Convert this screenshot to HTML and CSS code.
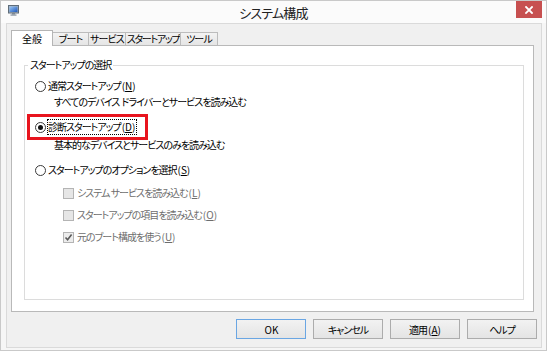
FILE: index.html
```html
<!DOCTYPE html>
<html lang="ja">
<head>
<meta charset="utf-8">
<title>システム構成</title>
<link rel="stylesheet" href="styles.css">
</head>
<body>
<div class="window">
  <div class="titlebar">
    <div class="tb-left">
      <svg class="app-icon" viewBox="0 0 11 11" aria-hidden="true">
        <defs>
          <linearGradient id="scr" x1="0" y1="0" x2="1" y2="1">
            <stop offset="0" stop-color="#9cc8f5"/>
            <stop offset="1" stop-color="#1d58bd"/>
          </linearGradient>
        </defs>
        <rect x="0.5" y="0.5" width="10" height="7.5" fill="#a7b1bb" stroke="#5f6d7a"/>
        <rect x="1.5" y="1.5" width="8" height="5.5" fill="url(#scr)"/>
        <rect x="4" y="8.3" width="3" height="1.2" fill="#6b7784"/>
        <rect x="2.5" y="9.4" width="6" height="1.3" fill="#8a96a3"/>
      </svg>
    </div>
    <div class="title">システム構成</div>
    <div class="tb-right">
      <div class="close">
        <svg viewBox="0 0 8 8" class="close-x" aria-hidden="true">
          <path d="M1 1 L7 7 M7 1 L1 7" stroke="#fff" stroke-width="1.8" stroke-linecap="square"/>
        </svg>
      </div>
    </div>
  </div>

  <div class="client">
    <div class="tabs">
      <div class="tab selected w-zen">全般</div>
      <div class="tab w-boot">ブート</div>
      <div class="tab w-svc">サービス</div>
      <div class="tab w-start">スタートアップ</div>
      <div class="tab w-tool">ツール</div>
    </div>

    <div class="panel">
      <fieldset class="group">
        <legend>スタートアップの選択</legend>
        <div class="opts">
          <div class="row r1"><span class="radio"></span><span class="lbl">通常スタートアップ<span class="key">(<u>N</u>)</span></span></div>
          <div class="desc">すべてのデバイス ドライバーとサービスを読み込む</div>
          <div class="annot">
            <div class="row"><span class="radio checked"></span><span class="lbl focus">診断スタートアップ<span class="key">(<u>D</u>)</span></span></div>
          </div>
          <div class="desc d2">基本的なデバイスとサービスのみを読み込む</div>
          <div class="row r3"><span class="radio"></span><span class="lbl">スタートアップのオプションを選択<span class="key">(<u>S</u>)</span></span></div>
          <div class="row cb-row c1"><span class="check"></span><span class="lbl dis">システム サービスを読み込む<span class="key">(<u>L</u>)</span></span></div>
          <div class="row cb-row c2"><span class="check"></span><span class="lbl dis">スタートアップの項目を読み込む<span class="key">(<u>O</u>)</span></span></div>
          <div class="row cb-row c3"><span class="check checked">
            <svg viewBox="0 0 9 9" class="tick" aria-hidden="true"><path d="M1.5 4.5 L3.6 6.8 L7.6 1.6" fill="none" stroke="#5a5a5a" stroke-width="1.6"/></svg>
          </span><span class="lbl dis">元のブート構成を使う<span class="key">(<u>U</u>)</span></span></div>
        </div>
      </fieldset>
    </div>

    <div class="buttons">
      <div class="btn default"><span class="key">OK</span></div>
      <div class="btn">キャンセル</div>
      <div class="btn">適用<span class="key">(<u>A</u>)</span></div>
      <div class="btn">ヘルプ</div>
    </div>
  </div>
</div>
</body>
</html>
```

FILE: styles.css
```css
* { box-sizing: border-box; }
html, body { margin: 0; padding: 0; }
body {
  width: 547px;
  height: 351px;
  overflow: hidden;
  background: #fff;
  font-family: "Noto Sans CJK JP", "Liberation Sans", sans-serif;
  font-size: 10px;
  color: #000;
  font-feature-settings: "palt";
  letter-spacing: -1px;
}
u { text-decoration: underline; text-underline-offset: 1px; }
.key { letter-spacing: 0; padding-left: 1px; }

.window {
  width: 547px;
  height: 351px;
  border: 1px solid #c9c9c9;
  background: #f6f6f6;
  display: flex;
  flex-direction: column;
}

/* title bar */
.titlebar {
  height: 22px;
  display: grid;
  grid-template-columns: 1fr auto 1fr;
  align-items: start;
  background: #fbfbfb;
}
.tb-left { padding: 4px 0 0 7px; }
.app-icon { display: block; width: 11px; height: 11px; }
.title {
  font-size: 13px;
  line-height: 22px;
  padding-top: 1px;
  letter-spacing: -0.8px;
  color: #222;
}
.tb-right { display: flex; justify-content: flex-end; padding-right: 4px; }
.close {
  width: 26px;
  height: 17px;
  background: #c75050;
  display: flex;
  align-items: center;
  justify-content: center;
}
.close-x { width: 8px; height: 8px; display: block; }

/* client area */
.client {
  flex: 1;
  margin: 0 4px 2px 5px;
  border: 1px solid #dadada;
  background: #f0f0f0;
  padding: 6px 4px 0 4px;
  display: flex;
  flex-direction: column;
}

/* tabs */
.tabs {
  display: flex;
  align-items: flex-end;
  height: 15px;
  position: relative;
  z-index: 1;
}
.tab {
  flex: none;
  height: 13px;
  border: 1px solid #bcbcbc;
  border-bottom: none;
  margin-left: -1px;
  background: linear-gradient(#f3f3f3, #e5e5e5);
  display: flex;
  align-items: center;
  justify-content: center;
  line-height: 12px;
  white-space: nowrap;
  overflow: hidden;
  letter-spacing: -0.9px;
}
.tab.selected {
  height: 16px;
  margin-left: 0;
  margin-bottom: -1px;
  background: #fff;
  position: relative;
  z-index: 2;
  border-color: #b5b5b5;
  letter-spacing: 0;
}
.w-zen { width: 42px; }
.w-boot { width: 37px; }
.w-svc { width: 38px; }
.w-start { width: 56px; letter-spacing: -1.3px; }
.w-tool { width: 38px; }

/* panel */
.panel {
  height: 267px;
  margin-right: 3px;
  border: 1px solid #b9b9b9;
  background: #fff;
  padding: 0 9px 11px 12px;
  display: flex;
  flex-direction: column;
}
.group {
  margin: 12px 0 0 0;
  flex: 1;
  border: 1px solid #dcdcdc;
  padding: 0;
  min-width: 0;
}
.group legend {
  margin-left: 3px;
  padding: 0 2px;
  line-height: 14px;
}
.opts {
  padding: 6px 0 0 10px;
  display: flex;
  flex-direction: column;
  align-items: flex-start;
}
.row {
  display: flex;
  align-items: center;
  height: 16px;
}
.radio {
  width: 11px;
  height: 11px;
  border: 1px solid #3a3a3a;
  border-radius: 50%;
  background: #fff;
  margin-right: 1px;
  display: flex;
  align-items: center;
  justify-content: center;
  flex: none;
}
.radio.checked::after {
  content: "";
  width: 5px;
  height: 5px;
  border-radius: 50%;
  background: #111;
}
.lbl {
  border: 1px solid transparent;
  padding: 0 1px 0 0;
  line-height: 14px;
  white-space: nowrap;
}
.lbl.focus { border: 1px dotted #000; }
.lbl.dis { color: #6d6d6d; }

.desc {
  height: 16px;
  line-height: 16px;
  padding-left: 19px;
  white-space: pre;
  word-spacing: 1px;
}
.annot {
  border: 3px solid #e8141e;
  padding: 2px 8px 2px 5px;
  margin: 4px 0 -5px -8px;
}
.d2 { margin-top: 2px; }
.r3 { margin-top: 9px; }
.cb-row { padding-left: 28px; }
.c1 { margin-top: 7px; }
.c2, .c3 { margin-top: 6px; }
.check {
  width: 11px;
  height: 11px;
  border: 1px solid #b4b4b4;
  background: #e6e6e6;
  margin-right: 2px;
  flex: none;
  display: flex;
  align-items: center;
  justify-content: center;
}
.check.checked { background: #ececec; }
.tick { width: 9px; height: 9px; display: block; }

/* buttons */
.buttons {
  display: flex;
  justify-content: flex-end;
  gap: 7px;
  margin-top: 7px;
}
.btn {
  width: 70px;
  height: 20px;
  border: 1px solid #acacac;
  background: linear-gradient(#f2f2f2, #e4e4e4);
  display: flex;
  align-items: center;
  justify-content: center;
  white-space: nowrap;
}
.btn.default { border-color: #6aa6e3; }
```
